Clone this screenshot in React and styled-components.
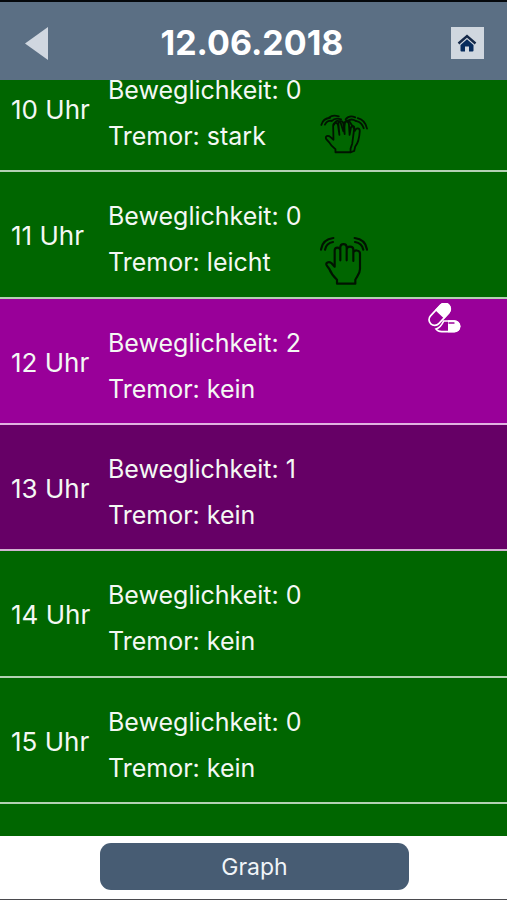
import React, { useLayoutEffect, useRef } from 'react';
import styled, { createGlobalStyle } from 'styled-components';

const GlobalStyle = createGlobalStyle`
  * {
    box-sizing: border-box;
  }
  body {
    margin: 0;
    font-family: Inter, "Liberation Sans", sans-serif;
  }
`;

const Container = styled.div`
  width: 100%;
  height: 100vh;
  display: flex;
  flex-direction: column;
  border-top: 2px solid #05080c;
  border-bottom: 1px solid #4a4a4e;
  background-color: #fff;
`;

const Header = styled.header`
  height: 78px;
  flex-shrink: 0;
  display: flex;
  justify-content: space-between;
  align-items: center;
  padding: 4px 23px 0 20px;
  background-color: #5b6f84;
`;

const Title = styled.h1`
  margin: 0;
  font-size: 34px;
  font-weight: 700;
  line-height: 40px;
  color: #fff;
`;

const IconButton = styled.button`
  width: 33px;
  height: 32px;
  display: flex;
  justify-content: center;
  align-items: center;
  padding: 0;
  border: none;
  background-color: ${props => props.$filled ? '#d0d7df' : 'transparent'};
  cursor: pointer;
`;

const List = styled.ul`
  flex: 1;
  min-height: 0;
  margin: 0;
  padding: 0;
  list-style: none;
  overflow-y: auto;
  scrollbar-width: none;
  background-color: #006600;
`;

const Rows = styled.div`
  min-height: 790px;
  display: grid;
  grid-auto-rows: 1fr;
  padding-bottom: 32px;
`;

const colors = {
  0: '#006600',
  1: '#660066',
  2: '#990099',
};

const Row = styled.li`
  display: grid;
  grid-template-columns: 108px 1fr 48px 139px;
  border-bottom: 2px solid rgba(255, 255, 255, 0.7);
  background-color: ${props => colors[props.$level]};
  color: #f4f8f4;
`;

const Time = styled.span`
  align-self: center;
  padding: 4px 0 0 11px;
  font-size: 26px;
  line-height: 32px;
`;

const Values = styled.div`
  padding-top: 21px;
`;

const Value = styled.p`
  margin: 0;
  font-size: 25px;
  line-height: 46px;
  white-space: nowrap;
`;

const TremorCell = styled.div`
  align-self: end;
  height: 50px;
  display: flex;
  align-items: center;
  margin-bottom: 11px;
`;

const PillCell = styled.div`
  display: flex;
  justify-content: center;
  align-items: flex-start;
  padding: 4px 0 0 12px;
`;

const Footer = styled.footer`
  height: 63px;
  flex-shrink: 0;
  display: flex;
  justify-content: center;
  align-items: center;
  padding: 0 0 2px 2px;
`;

const GraphButton = styled.button`
  width: 61%;
  height: 47px;
  border: none;
  border-radius: 11px;
  background-color: #475c73;
  color: #f0f4f8;
  font-family: inherit;
  font-size: 23px;
  cursor: pointer;
`;

const BackIcon = () =>
  <svg width="25" height="33" viewBox="0 0 25 33" aria-hidden="true">
    <path d="M24 0V33L1 16.5Z" fill="#d0d7e0" />
  </svg>;

const HomeIcon = () =>
  <svg width="20" height="18" viewBox="0 0 20 18" aria-hidden="true">
    <path d="M1.5 9.5L10 2L18.5 9.5" fill="none" stroke="#142848" strokeWidth="2.4" />
    <path d="M3.5 11L10 5.2L16.5 11V16.5Q16.5 17.5 15.5 17.5H12V12.5H8V17.5H4.5Q3.5 17.5 3.5 16.5Z" fill="#062b5c" />
  </svg>;

const LightTremorIcon = () =>
  <svg width="48" height="49" viewBox="30 33 144 147" fill="none" stroke="#001400" strokeWidth="6.5" strokeLinecap="round" strokeLinejoin="round" role="img" aria-label="leichter Tremor">
    <path d="M81 176V164Q64 148 58 132L50 121C46 113 56 108 64 114L74 125V76C74 65 91 65 91 76V106V67C91 54 110 54 110 67V106V74C110 62 130 62 130 74V108V84C130 73 150 74 150 86V132C150 147 141 154 136 164V176Z" />
    <path d="M33 74Q37 43 70 39M45 74Q49 54 69 51M134 39Q167 43 171 74M135 51Q156 54 160 74" />
  </svg>;

const StrongTremorIcon = () =>
  <svg width="49" height="42" viewBox="30 25 146 125" fill="none" stroke="#001400" strokeWidth="5.5" strokeLinecap="round" strokeLinejoin="round" role="img" aria-label="starker Tremor">
    <path d="M77 143V134Q64 124 58 113L49 103C44 94 54 90 62 97L71 105L70 63C70 52 83 50 85 61L89 90L86 57C86 46 99 45 101 56L105 88L104 57C105 47 117 48 118 58L120 90L124 68C127 60 136 63 134 72L128 117L123 132V143Z" />
    <path d="M124 143L134 139L137 126Q149 112 151 78C151 68 140 67 136 78" />
    <path d="M73 59C76 46 88 44 93 54L101 79L106 52C109 44 120 46 123 55L134 71" />
    <path d="M34 60Q39 40 61 38M45 59Q51 46 67 47M58 37Q69 28 87 34M66 48Q75 37 94 43M108 43Q119 29 137 37M113 49Q125 38 139 48M145 39Q168 45 173 71M141 48Q158 52 163 70" />
  </svg>;

const PillIcon = () =>
  <svg width="34" height="30" viewBox="35 38 102 90" role="img" aria-label="Medikament">
    <g transform="rotate(-47 73 72)">
      <rect x="34" y="55" width="78" height="34" rx="17" fill="none" stroke="#fff" strokeWidth="5" />
      <path d="M73 53H95A19 19 0 0 1 95 91H73Z" fill="#fff" />
    </g>
    <path d="M85 92H117A16 16 0 0 1 117 124H79Q68 124 62 116Q76 112 85 92Z" fill="#990099" stroke="#fff" strokeWidth="5" />
    <path d="M98 90H117A18 18 0 0 1 117 126H98Z" fill="#fff" />
    <path d="M101 98H116" stroke="#990099" strokeWidth="4" strokeLinecap="round" />
  </svg>;

const tremorIcons = {
  leicht: LightTremorIcon,
  stark: StrongTremorIcon,
};

const entries = [
  { hour: 10, level: 0, tremor: 'stark' },
  { hour: 11, level: 0, tremor: 'leicht' },
  { hour: 12, level: 2, tremor: 'kein', pill: true },
  { hour: 13, level: 1, tremor: 'kein' },
  { hour: 14, level: 0, tremor: 'kein' },
  { hour: 15, level: 0, tremor: 'kein' },
];

const Entry = ({ hour, level, tremor, pill }) => {
  const TremorIcon = tremorIcons[tremor];
  return (
    <Row $level={level}>
      <Time>{hour} Uhr</Time>
      <Values>
        <Value>Beweglichkeit: {level}</Value>
        <Value>Tremor: {tremor}</Value>
      </Values>
      <TremorCell>{TremorIcon && <TremorIcon />}</TremorCell>
      <PillCell>{pill && <PillIcon />}</PillCell>
    </Row>
  );
};

const App = () => {
  const list = useRef(null);

  // the list opens at its end, the first hour is cut by the header
  useLayoutEffect(() => {
    list.current.scrollTop = list.current.scrollHeight;
  }, []);

  return (
    <Container>
      <GlobalStyle />
      <Header>
        <IconButton aria-label="Zurück"><BackIcon /></IconButton>
        <Title>12.06.2018</Title>
        <IconButton $filled aria-label="Startseite"><HomeIcon /></IconButton>
      </Header>
      <List ref={list}>
        <Rows>
          {entries.map(entry => <Entry key={entry.hour} {...entry} />)}
        </Rows>
      </List>
      <Footer>
        <GraphButton>Graph</GraphButton>
      </Footer>
    </Container>
  );
};

export default App;
